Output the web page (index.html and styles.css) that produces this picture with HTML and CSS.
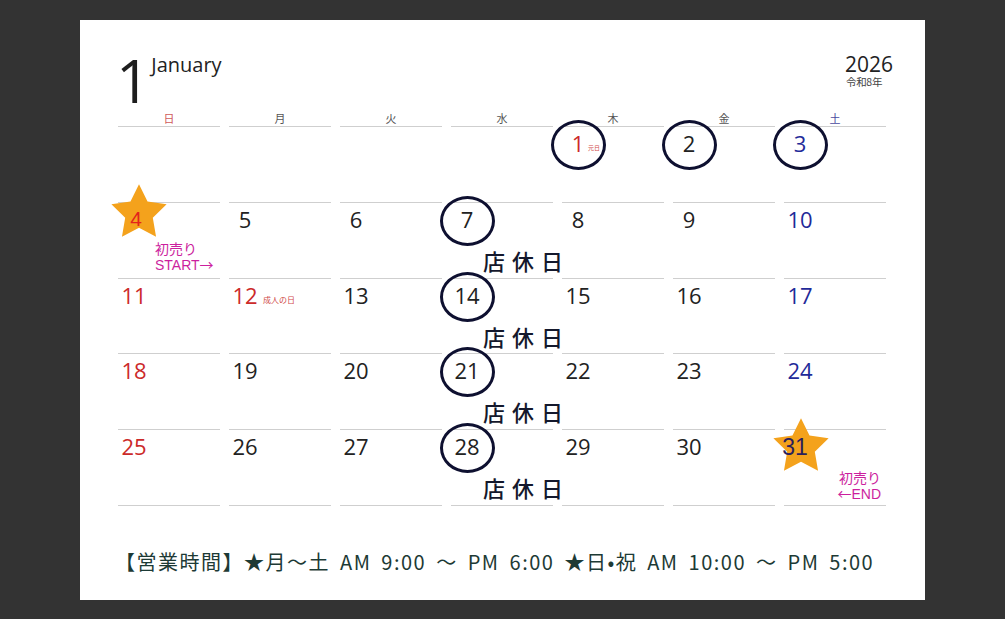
FILE: index.html
```html
<!DOCTYPE html>
<html lang="ja">
<head>
<meta charset="utf-8">
<title>January 2026</title>
<link rel="stylesheet" href="styles.css">
</head>
<body>
<div class="card">
  <header class="head">
    <div class="month"><span class="mnum">1</span><span class="mname">January</span></div>
    <div class="year"><span class="ynum">2026</span><span class="era">令和8年</span></div>
  </header>
  <div class="grid">
    <div class="wd sun">日</div>
    <div class="wd">月</div>
    <div class="wd">火</div>
    <div class="wd">水</div>
    <div class="wd">木</div>
    <div class="wd">金</div>
    <div class="wd sat">土</div>

    <div class="cell"></div>
    <div class="cell"></div>
    <div class="cell"></div>
    <div class="cell"></div>
    <div class="cell"><span class="num red circ">1</span><span class="hl hl-1">元日</span></div>
    <div class="cell"><span class="num circ">2</span></div>
    <div class="cell"><span class="num blue circ">3</span></div>

    <div class="cell">
      <span class="num star star-4"><svg class="starbg" viewBox="0 0 100 96"><polygon points="50,2 64.7,31.8 97.6,36.5 73.8,59.7 79.4,92.5 50,77 20.6,92.5 26.2,59.7 2.4,36.5 35.3,31.8"/></svg><span class="stxt s4">4</span></span>
      <div class="sale sale-start">初売り<br>START<span class="arr">→</span></div>
    </div>
    <div class="cell"><span class="num">5</span></div>
    <div class="cell"><span class="num">6</span></div>
    <div class="cell"><span class="num circ">7</span><div class="closed">店休日</div></div>
    <div class="cell"><span class="num">8</span></div>
    <div class="cell"><span class="num">9</span></div>
    <div class="cell"><span class="num blue">10</span></div>

    <div class="cell"><span class="num red">11</span></div>
    <div class="cell"><span class="num red">12</span><span class="hl hl-12">成人の日</span></div>
    <div class="cell"><span class="num">13</span></div>
    <div class="cell"><span class="num circ">14</span><div class="closed">店休日</div></div>
    <div class="cell"><span class="num">15</span></div>
    <div class="cell"><span class="num">16</span></div>
    <div class="cell"><span class="num blue">17</span></div>

    <div class="cell"><span class="num red">18</span></div>
    <div class="cell"><span class="num">19</span></div>
    <div class="cell"><span class="num">20</span></div>
    <div class="cell"><span class="num circ">21</span><div class="closed">店休日</div></div>
    <div class="cell"><span class="num">22</span></div>
    <div class="cell"><span class="num">23</span></div>
    <div class="cell"><span class="num blue">24</span></div>

    <div class="cell"><span class="num red">25</span></div>
    <div class="cell"><span class="num">26</span></div>
    <div class="cell"><span class="num">27</span></div>
    <div class="cell"><span class="num circ">28</span><div class="closed">店休日</div></div>
    <div class="cell"><span class="num">29</span></div>
    <div class="cell"><span class="num">30</span></div>
    <div class="cell">
      <span class="num star star-31"><svg class="starbg" viewBox="0 0 100 96"><polygon points="50,2 64.7,31.8 97.6,36.5 73.8,59.7 79.4,92.5 50,77 20.6,92.5 26.2,59.7 2.4,36.5 35.3,31.8"/></svg><span class="stxt s31">31</span></span>
      <div class="sale sale-end">初売り<br><span class="arr">←</span>END</div>
    </div>
  </div>
  <footer class="foot">【営業時間】★月～土 AM 9:00 ～ PM 6:00 ★日•祝 AM 10:00 ～ PM 5:00</footer>
</div>
</body>
</html>
```

FILE: styles.css
```css
html, body {
  margin: 0;
  height: 619px;
  background: #333333;
}
body {
  padding: 20px 80px 0 80px;
  box-sizing: border-box;
  font-family: "Open Sans", "Noto Sans CJK JP", sans-serif;
  color: #222;
}
.card {
  width: 845px;
  height: 580px;
  background: #ffffff;
  box-sizing: border-box;
  padding: 0 39px 0 38px;
  overflow: hidden;
}

/* header */
.head {
  display: flex;
  justify-content: space-between;
  align-items: flex-start;
  height: 90px;
  box-sizing: border-box;
  padding-top: 30px;
}
.month {
  display: flex;
  align-items: flex-start;
  margin-left: -2px;
}
.mnum {
  font-size: 60px;
  line-height: 60px;
  color: #1e1e1e;
}
.mname {
  font-size: 20px;
  line-height: 24px;
  margin-top: 3px;
  margin-left: 1px;
  color: #222;
}
.year {
  display: flex;
  flex-direction: column;
  align-items: flex-start;
  padding-top: 4px;
  margin-right: -7px;
}
.ynum {
  font-size: 21px;
  line-height: 21px;
  color: #222;
}
.era {
  font-family: "Noto Sans CJK JP", sans-serif;
  font-size: 10.5px;
  line-height: 11px;
  margin-top: 1px;
  margin-left: 1px;
  color: #444;
  letter-spacing: -0.3px;
}

/* grid */
.grid {
  display: grid;
  grid-template-columns: repeat(7, 102px);
  column-gap: 9px;
}
.wd {
  height: 16px;
  border-bottom: 1px solid #cfcfcf;
  font-family: "Noto Sans CJK JP", sans-serif;
  font-size: 11px;
  line-height: 16px;
  text-align: center;
  color: #555;
}
.wd.sun { color: #d05a5a; }
.wd.sat { color: #4a4aa0; }

.cell {
  position: relative;
  box-sizing: border-box;
  height: 75.75px;
  border-bottom: 1px solid #cfcfcf;
  padding-top: 3px;
}
.num {
  display: inline-block;
  position: relative;
  width: 32px;
  text-align: center;
  font-size: 22px;
  line-height: 26px;
  color: #222;
}
.num.red { color: #cc2a2a; }
.num.blue { color: #1f2a99; }
.num.circ::after {
  content: "";
  position: absolute;
  left: 50%;
  top: 50%;
  width: 55px;
  height: 50px;
  margin: -23px 0 0 -27px;
  box-sizing: border-box;
  border: 3px solid #0e1030;
  border-radius: 50%;
}

/* stars */
.starbg {
  position: absolute;
  width: 58px;
  height: 56px;
  fill: #f4a21c;
}
.star-4 .starbg { left: -8px; top: -23px; }
.star-31 .starbg { left: -12px; top: -16px; }
.stxt {
  position: relative;
  font-family: "Liberation Sans", Arial, sans-serif;
}
.s4 { color: #e3231b; font-size: 21px; left: 2px; top: -2px; }
.s31 { color: #2b1f5c; font-size: 23px; left: -5px; }

/* holiday labels */
.hl {
  position: absolute;
  top: 17px;
  font-family: "Noto Sans CJK JP", sans-serif;
  font-size: 7px;
  line-height: 8px;
  color: #d04a4a;
  white-space: nowrap;
}
.hl-1 { left: 26px; font-size: 6px; }
.hl-12 { left: 34px; font-size: 8px; }

/* 初売り */
.sale {
  position: absolute;
  font-family: "Liberation Sans", "Noto Sans CJK JP", sans-serif;
  font-size: 14px;
  line-height: 15px;
  color: #cc1f9e;
  white-space: nowrap;
}
.sale .arr {
  font-family: "Noto Sans CJK JP", sans-serif;
  line-height: 14px;
}
.sale-start { left: 37px; top: 39px; }
.sale-end { right: 5px; top: 41px; text-align: right; }

/* 店休日 */
.closed {
  position: absolute;
  left: 32px;
  top: 45px;
  font-family: "Noto Sans CJK JP", sans-serif;
  font-weight: 500;
  font-size: 22px;
  line-height: 24px;
  letter-spacing: 7px;
  color: #14182c;
  white-space: nowrap;
}

/* footer */
.foot {
  margin-top: 44px;
  margin-left: -3px;
  font-family: "Noto Sans CJK JP", sans-serif;
  font-size: 20px;
  line-height: 24px;
  color: #1d3a35;
  letter-spacing: 1.5px;
  word-spacing: 4px;
  white-space: nowrap;
}
```
